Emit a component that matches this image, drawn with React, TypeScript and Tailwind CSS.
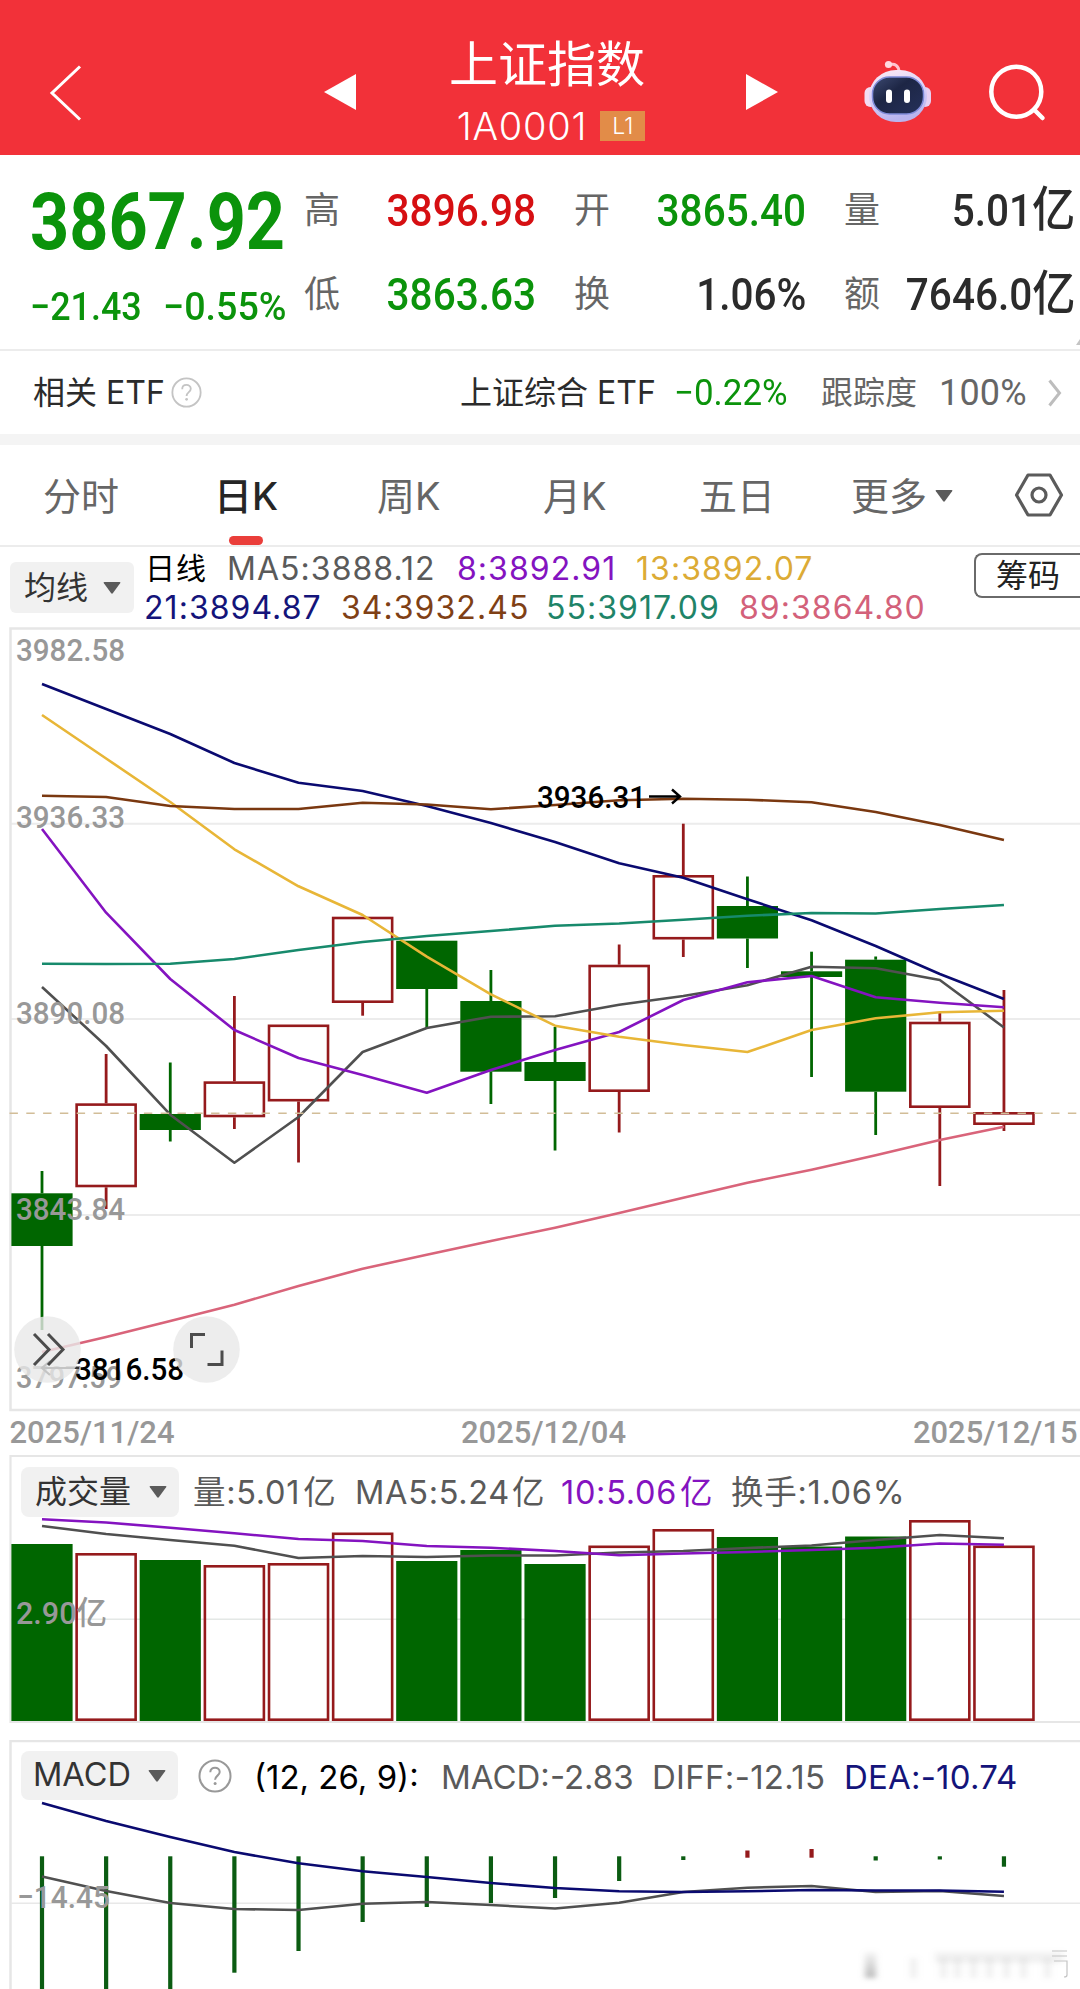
import { ReactNode } from "react";

const RED = "#951a1c";
const GREEN = "#006600";

// x centre of the n-th trading day
const cx = (i: number) => 42 + i * 64.13;

type Candle = { up: boolean; top: number; bottom: number; high: number; low: number };

const candles: Candle[] = [
  { up: false, top: 1193.3, bottom: 1246, high: 1171, low: 1330 },
  { up: true, top: 1103.3, bottom: 1187.3, high: 1054, low: 1209 },
  { up: false, top: 1114, bottom: 1130, high: 1062.5, low: 1141.5 },
  { up: true, top: 1081.3, bottom: 1117.3, high: 996, low: 1129 },
  { up: true, top: 1024.5, bottom: 1101.5, high: 1024.5, low: 1162.5 },
  { up: true, top: 916.7, bottom: 1003, high: 916.7, low: 1015.7 },
  { up: false, top: 940.7, bottom: 989, high: 940.7, low: 1028 },
  { up: false, top: 1001, bottom: 1071.7, high: 970, low: 1104 },
  { up: false, top: 1062, bottom: 1081, high: 1027, low: 1150.5 },
  { up: true, top: 964.7, bottom: 1092, high: 944.5, low: 1132.5 },
  { up: true, top: 875, bottom: 939.5, high: 823.7, low: 957 },
  { up: false, top: 906, bottom: 938.5, high: 876.5, low: 968 },
  { up: false, top: 971.3, bottom: 977, high: 951.7, low: 1077 },
  { up: false, top: 959.7, bottom: 1091.7, high: 956.5, low: 1135 },
  { up: true, top: 1021.7, bottom: 1108, high: 1013, low: 1186 },
  { up: true, top: 1112, bottom: 1125, high: 990, low: 1131 },
];

const maLines = [
  { color: "#505050", ys: [987, 1046, 1114.7, 1162.7, 1117, 1052, 1028, 1016.7, 1016.3, 1004.7, 996, 985.3, 966.7, 968.3, 980, 1027.5] },
  { color: "#8413c0", ys: [829, 912.7, 979, 1030, 1058, 1075, 1092.7, 1070, 1050, 1032, 1000, 982.3, 976, 997.3, 1002.7, 1007.3] },
  { color: "#e8b637", ys: [715, 758.5, 802, 849.3, 886.3, 915, 956.7, 994.3, 1025.7, 1036.7, 1045, 1052, 1030, 1018.3, 1012.3, 1010.7] },
  { color: "#0a0a70", ys: [684, 709, 734, 763, 782.7, 791, 806, 823, 842, 863.3, 877.7, 899.3, 920.3, 946, 974, 999] },
  { color: "#7a3810", ys: [795.7, 797, 806, 809, 809, 802.7, 804.5, 809.3, 805, 800.3, 798.7, 799.7, 802.3, 812, 825, 840] },
  { color: "#178a6c", ys: [963.7, 964, 963.7, 959, 950, 942, 936, 931, 925.8, 923.5, 919.7, 915.7, 913, 913.5, 909, 905] },
  { color: "#d9647a", ys: [1352, 1337, 1321, 1304.7, 1286, 1268.7, 1254.7, 1241, 1227.7, 1213, 1197.7, 1182.7, 1169.7, 1155.3, 1140, 1126.7] },
];

const volumes = [1544, 1553, 1560, 1565, 1563, 1532.5, 1561, 1550, 1564, 1545.5, 1529, 1537, 1546.5, 1536.5, 1520, 1545.5];

const volLines = [
  { color: "#505050", ys: [1526, 1534, 1540, 1545.7, 1558, 1556, 1557, 1555.5, 1555.5, 1552.5, 1551, 1548, 1545.5, 1540, 1535, 1538.3] },
  { color: "#8413c0", ys: [1519.3, 1522.5, 1527.7, 1533.3, 1539, 1541, 1546, 1547.7, 1551, 1555.3, 1553.5, 1552, 1550, 1547.7, 1543.5, 1544.7] },
];

const macdBars = [
  [1856.3, 1989], [1856.3, 1989], [1856.3, 1989], [1856.3, 1972.7],
  [1856.3, 1951], [1856.3, 1922], [1856.3, 1907], [1856.3, 1903],
  [1856.3, 1898], [1856.3, 1881], [1856.3, 1860], [1850.5, 1857.7],
  [1849, 1857.7], [1856.3, 1860.5], [1856.3, 1859.5], [1856.3, 1866.7],
];

const macdLines = [
  { color: "#505050", ys: [1876.5, 1891, 1903, 1909, 1910, 1903.7, 1902, 1905, 1908.5, 1902.7, 1892, 1887.7, 1886, 1892, 1891, 1896] },
  { color: "#0a0a70", ys: [1803, 1821, 1837, 1852, 1863.3, 1871.3, 1877, 1883, 1888, 1891.3, 1892, 1891.3, 1890, 1890.5, 1890.5, 1891.7] },
];

function Line({ color, ys }: { color: string; ys: number[] }) {
  return (
    <polyline
      points={ys.map((y, i) => `${cx(i)},${y}`).join(" ")}
      fill="none"
      stroke={color}
      strokeWidth={2.6}
      strokeLinejoin="round"
    />
  );
}

function Label({ x, y, w, color = "#989898", children }: { x: number; y: number; w: number; color?: string; children: ReactNode }) {
  return (
    <text
      x={x}
      y={y}
      textLength={w}
      lengthAdjust="spacingAndGlyphs"
      fill={color}
      className="font-['Roboto','Noto_Sans_CJK_SC',sans-serif] text-[32px] font-medium"
    >
      {children}
    </text>
  );
}

function Caret({ className = "" }: { className?: string }) {
  return (
    <svg viewBox="0 0 18 12" className={`h-3 w-[18px] shrink-0 ${className}`} fill="#5b5b5b">
      <path d="M1.5 0h15q1.5 0 .6 1.3L10 11q-1 1.300-2 0L.9 1.300Q0 0 1.500 0z" />
    </svg>
  );
}

function HelpIcon({ className = "" }: { className?: string }) {
  return (
    <svg viewBox="0 0 34 34" className={`shrink-0 ${className}`} fill="none" stroke="currentColor" strokeWidth={2}>
      <circle cx="17" cy="17" r="15.500" />
      <path d="M12.300 13.300c0-6.200 9.400-6 9.400-.3 0 3.600-4.600 3.700-4.600 7.800" />
      <circle cx="17.100" cy="24.500" r="1.500" fill="currentColor" stroke="none" />
    </svg>
  );
}

function RobotIcon() {
  return (
    <svg viewBox="0 0 68 64" className="h-16 w-[68px]">
      <defs>
        <linearGradient id="shell" x1="0" y1="0" x2="0.300" y2="1">
          <stop offset="0" stopColor="#ffeaf2" />
          <stop offset="0.500" stopColor="#dcd3fa" />
          <stop offset="1" stopColor="#b9b4ee" />
        </linearGradient>
        <linearGradient id="face" x1="0" y1="0" x2="1" y2="1">
          <stop offset="0" stopColor="#3d4a72" />
          <stop offset="0.400" stopColor="#1d2645" />
          <stop offset="1" stopColor="#25305a" />
        </linearGradient>
      </defs>
      <path d="M25 5c6-2 10 1 10 7" fill="none" stroke="#ffc4cf" strokeWidth="3" strokeLinecap="round" />
      <circle cx="24.500" cy="4.500" r="3.600" fill="#ffd9e0" />
      <rect x="0.500" y="27" width="12" height="20" rx="6" fill="#f3dcf3" />
      <rect x="55" y="27" width="12" height="20" rx="6" fill="#e7d0f2" />
      <rect x="5" y="10" width="58" height="52" rx="27" fill="url(#shell)" />
      <rect x="8.500" y="17" width="51" height="37" rx="17" fill="url(#face)" stroke="#7f8bd8" strokeWidth="1.500" />
      <rect x="22" y="29.500" width="6" height="13.500" rx="3" fill="#fff" />
      <rect x="40" y="29.500" width="6" height="13.500" rx="3" fill="#fff" />
    </svg>
  );
}

function Header() {
  return (
    <header className="flex h-[155px] bg-[#f23139] text-white">
      <div className="w-[324px] pt-[65px] pl-[49px]">
        <svg viewBox="0 0 34 56" className="h-14 w-[34px]" fill="none" stroke="#fff" strokeWidth={3}>
          <path d="M31 1.500 3 28l28 26.500" />
        </svg>
      </div>
      <svg viewBox="0 0 32 36" className="mt-[74px] h-9 w-8" fill="#fff">
        <path d="M0 18 32 0v36z" />
      </svg>
      <div className="flex w-[390px] flex-col items-center">
        <div className="mt-[39px] pr-2 text-[49px] leading-[52px]">上证指数</div>
        <div className="mt-[18px] flex h-[34px] items-center gap-[13px]">
          <span className="text-[38px] leading-[34px] font-light tracking-[0.8px]">1A0001</span>
          <span className="flex h-[30px] w-[45px] items-center justify-center bg-[#e28c48] text-[23px] leading-none font-light">L1</span>
        </div>
      </div>
      <svg viewBox="0 0 32 36" className="mt-[74px] h-9 w-8" fill="#fff">
        <path d="M32 18 0 0v36z" />
      </svg>
      <div className="mt-[60px] ml-[86px]">
        <RobotIcon />
      </div>
      <svg viewBox="0 0 60 60" className="mt-[62px] ml-[56px] h-[60px] w-[60px]" fill="none" stroke="#fff" strokeWidth={4.5} strokeLinecap="round">
        <circle cx="28.300" cy="29.700" r="25" />
        <path d="m46 47.500 8.500 8.500" />
      </svg>
    </header>
  );
}

function Stat({ label, value, unit, color, w }: { label: string; value: string; unit?: string; color: string; w: string }) {
  return (
    <div className={`flex h-[40px] items-center justify-between ${w}`}>
      <span className="text-[36px] leading-none text-[#666]">{label}</span>
      <span className={`origin-right scale-x-[0.9] font-['Roboto','Noto_Sans_CJK_SC',sans-serif] text-[45px] leading-none font-medium whitespace-nowrap ${color}`}>
        {value}
        {unit && <span className="text-[48px] leading-none">{unit}</span>}
      </span>
    </div>
  );
}

function Quote() {
  return (
    <section className="relative flex h-[196px] border-b-2 border-[#ececec]">
      <div className="w-[304px] pl-[30px] font-['Roboto','Noto_Sans_CJK_SC',sans-serif] text-[#0b930b]">
        <div className="mt-[27px] origin-left scale-x-[0.865] text-[79px] leading-[80px] font-bold whitespace-nowrap">3867.92</div>
        <div className="mt-[20px] flex h-[50px] items-center text-[39px] leading-none font-medium whitespace-nowrap">
          <span className="w-[133px]">
            <span className="inline-block origin-left scale-x-[0.92]">−21.43</span>
          </span>
          <span className="inline-block origin-left scale-x-[0.965]">−0.55%</span>
        </div>
      </div>
      <div className="mt-[35px] grid h-[124px] grid-cols-[270px_270px_232px] content-between">
        <Stat label="高" value="3896.98" color="text-[#d60f12]" w="w-[232px]" />
        <Stat label="开" value="3865.40" color="text-[#0b930b]" w="w-[232px]" />
        <Stat label="量" value="5.01" unit="亿" color="text-[#2b2b2b]" w="w-[231px]" />
        <Stat label="低" value="3863.63" color="text-[#0b930b]" w="w-[232px]" />
        <Stat label="换" value="1.06%" color="text-[#2b2b2b]" w="w-[232px]" />
        <Stat label="额" value="7646.0" unit="亿" color="text-[#2b2b2b]" w="w-[231px]" />
      </div>
      <svg viewBox="0 0 4 6" className="absolute right-0 bottom-1 h-1.5 w-1" fill="#c4c4c4">
        <path d="M4 0v6H0z" />
      </svg>
    </section>
  );
}

function EtfRow() {
  return (
    <section className="flex h-[94px] items-center border-b-[11px] border-[#f4f4f4] pl-[33px] text-[32px] leading-none whitespace-nowrap text-[#2b2b2b]">
      <span className="w-[138px]">相关 ETF</span>
      <HelpIcon className="h-[31px] w-[31px] text-[#c4c4c4]" />
      <span className="ml-[258px] w-[214px]">上证综合 ETF</span>
      <span className="w-[147px] font-['Roboto'] text-[36px] text-[#0b930b]">
        <span className="inline-block origin-left scale-x-[0.97]">−0.22%</span>
      </span>
      <span className="w-[118px] text-[#666]">跟踪度</span>
      <span className="w-[109px] font-['Roboto'] text-[36px] tracking-[0.2px] text-[#666]">100%</span>
      <svg viewBox="0 0 14 28" className="h-7 w-3.5" fill="none" stroke="#bdbdbd" strokeWidth={3}>
        <path d="m1.500 1.500 10 12.500-10 12.500" />
      </svg>
    </section>
  );
}

function Tabs() {
  return (
    <nav className="flex h-[102px] border-b-2 border-[#ececec] pl-[43px] text-[38px] leading-[102px] whitespace-nowrap text-[#666]">
      <span className="w-[171px]">分时</span>
      <span className="relative w-[163px] font-medium text-[#262626]">
        日K
        <i className="absolute bottom-0 left-[15px] h-[9px] w-[34px] rounded-full bg-[#ea3e3a]" />
      </span>
      <span className="w-[166px]">周K</span>
      <span className="w-[156px]">月K</span>
      <span className="w-[152px]">五日</span>
      <span className="w-[84px]">更多</span>
      <Caret className="mt-[45px]" />
      <svg viewBox="0 0 50 44" className="mt-[28px] ml-[61px] h-11 w-[50px]" fill="none" stroke="#5b5b5b" strokeWidth={3.2} strokeLinejoin="round">
        <path d="M14 2h22l11.500 20L36 42H14L2.500 22z" />
        <circle cx="25" cy="22" r="7" />
      </svg>
    </nav>
  );
}

function MaLegend() {
  return (
    <section className="flex h-[80px] pl-[10px] text-[32px] whitespace-nowrap">
      <button className="mt-[15px] flex h-[51px] w-[124px] items-center gap-[15px] rounded-md bg-[#f1f1f1] pl-3.5 leading-none text-[#333]">
        均线
        <Caret />
      </button>
      <div className="ml-[10px] w-[830px] pt-[2px] text-[32px] leading-[39px] tracking-[1.05px]">
        <div className="flex">
          <span className="w-[83px] pl-px text-[30px] text-black">日线</span>
          <span className="w-[230px] text-[#5a5a5a]">MA5:3888.12</span>
          <span className="w-[179px] text-[#8413c0]">8:3892.91</span>
          <span className="text-[#dcab35]">13:3892.07</span>
        </div>
        <div className="flex">
          <span className="w-[197px] text-[#14147a]">21:3894.87</span>
          <span className="w-[205px] text-[#7f4015]">34:3932.45</span>
          <span className="w-[193px] text-[#1f8468]">55:3917.09</span>
          <span className="text-[#d3617a]">89:3864.80</span>
        </div>
      </div>
      <button className="mt-[6px] h-[45px] w-[106px] rounded-l-lg border-2 border-r-0 border-[#6a6a6a] pl-[20px] text-left text-[32px] leading-[38px] text-[#222]">
        筹码
      </button>
    </section>
  );
}

function KChart() {
  return (
    <section className="h-[828px]">
      <svg viewBox="0 627 1080 828" className="block h-[828px] w-full">
        <g stroke="#ececec" strokeWidth="2">
          <path d="M11 823.700h1069M11 1019h1069M11 1215h1069" />
        </g>
        <path d="M1080 628.500H10.500V1410H1080" fill="none" stroke="#e6e6e6" strokeWidth="2.500" />
        {candles.map((c, i) => {
          const color = c.up ? RED : GREEN;
          return (
            <g key={i}>
              {c.high < c.top && <path d={`M${cx(i)} ${c.high}V${c.top}`} stroke={color} strokeWidth="2.800" />}
              <path d={`M${cx(i)} ${c.bottom}V${c.low}`} stroke={color} strokeWidth="2.800" />
              {c.up ? (
                <rect x={cx(i) - 29.5} y={c.top + 1.3} width={59} height={c.bottom - c.top - 2.6} fill="none" stroke={RED} strokeWidth="2.600" />
              ) : (
                <rect x={cx(i) - 30.6} y={c.top} width={61.2} height={c.bottom - c.top} fill={GREEN} />
              )}
            </g>
          );
        })}
        {maLines.map((l) => (
          <Line key={l.color} {...l} />
        ))}
        <path d="M9.500 1113.300H1080" stroke="#d2bd98" strokeWidth="1.600" strokeDasharray="8.400 8.400" />
        <Label x={16} y={660.500} w={109}>3982.58</Label>
        <Label x={16} y={827.800} w={109}>3936.33</Label>
        <Label x={16} y={1024} w={109}>3890.08</Label>
        <Label x={16} y={1219.500} w={109}>3843.84</Label>
        <Label x={16} y={1387.500} w={106}>3797.59</Label>
        <Label x={537} y={808} w={109} color="#000">3936.31</Label>
        <path d="M649 796.500h31m-8-7 8 7-8 7" fill="none" stroke="#000" strokeWidth="2.400" />
        <path d="M79 1368H42m8-7-8 7 8 7" fill="none" stroke="#333" strokeWidth="2.200" />
        <Label x={75} y={1380} w={109} color="#000">3816.58</Label>
        <circle cx="47.500" cy="1349.500" r="33.300" fill="#e8e8e8" opacity="0.800" />
        <circle cx="206.500" cy="1349.500" r="33.300" fill="#e8e8e8" opacity="0.800" />
        <g fill="none" stroke="#4c4c4c" strokeWidth="3">
          <path d="m34 1334 15 15.500-15 15.500M48 1334l15 15.500-15 15.500" />
          <path d="M191.500 1348v-13.500H205M222 1350.500v14h-14.500" />
        </g>
        <Label x={9.500} y={1443} w={165}>2025/11/24</Label>
        <Label x={461} y={1443} w={165}>2025/12/04</Label>
        <Label x={913} y={1443} w={164.500}>2025/12/15</Label>
      </svg>
    </section>
  );
}

function VolumePanel() {
  return (
    <section className="relative h-[285px]">
      <svg viewBox="0 1455 1080 285" className="block h-[285px] w-full">
        <path d="M1080 1456H10.500V1722H1080" fill="none" stroke="#e6e6e6" strokeWidth="2.200" />
        <path d="M11 1619.300h1069" stroke="#e4e8e6" strokeWidth="1.500" />
        {volumes.map((top, i) =>
          candles[i].up ? (
            <rect key={i} x={cx(i) - 29.5} y={top + 1.3} width={59} height={1719.700 - top - 1.3} fill="none" stroke={RED} strokeWidth="2.600" />
          ) : (
            <rect key={i} x={cx(i) - 30.6} y={top} width={61.2} height={1721 - top} fill={GREEN} />
          )
        )}
        {volLines.map((l) => (
          <Line key={l.color} {...l} />
        ))}
        <Label x={16} y={1624} w={91}>2.90亿</Label>
      </svg>
      <div className="absolute top-3 left-[21px] flex h-[50px] items-center text-[32px] leading-none whitespace-nowrap text-[#5a5a5a]">
        <button className="flex h-[50px] w-[158px] items-center gap-[18px] rounded-lg bg-[#f1f1f1] pl-3.5 text-[#333]">
          成交量
          <Caret />
        </button>
        <div className="ml-3.5 flex pt-0.5 text-[32.5px] tracking-[0.7px]">
          <span className="w-[162px]">
            量:5.01<span className="ml-[3px]">亿</span>
          </span>
          <span className="w-[206px]">
            MA5:5.24<span className="ml-[2px]">亿</span>
          </span>
          <span className="w-[170px] text-[#8413c0]">
            10:5.06<span className="ml-[3px]">亿</span>
          </span>
          <span>换手:1.06%</span>
        </div>
      </div>
    </section>
  );
}

function MacdPanel() {
  return (
    <section className="relative h-[249px]">
      <svg viewBox="0 1740 1080 249" className="block h-[249px] w-full">
        <path d="M1080 1741H10.500V1989" fill="none" stroke="#e6e6e6" strokeWidth="2.500" />
        <path d="M11 1903.300h1069" stroke="#e8e8e8" strokeWidth="1.500" />
        {macdBars.map(([top, bottom], i) => (
          <rect key={i} x={cx(i) - 2.1} y={top} width={4.2} height={bottom - top} fill={i === 11 || i === 12 ? RED : "#0b5c12"} />
        ))}
        {macdLines.map((l) => (
          <Line key={l.color} {...l} />
        ))}
        <Label x={17} y={1907.500} w={93}>−14.45</Label>
        {/* faded watermark strip */}
        <defs>
          <filter id="soft" x="-20%" y="-20%" width="140%" height="140%">
            <feGaussianBlur stdDeviation="3 2.500" />
          </filter>
          <linearGradient id="fade" x1="0" y1="0" x2="0" y2="1">
            <stop offset="0" stopColor="#999" stopOpacity="0.100" />
            <stop offset="1" stopColor="#999" stopOpacity="0.700" />
          </linearGradient>
        </defs>
        <g filter="url(#soft)">
          <rect x="865" y="1952" width="11" height="26" fill="url(#fade)" />
          {[910, 940, 954, 970, 986, 1003, 1020, 1044].map((x) => (
            <rect key={x} x={x} y="1958" width="7" height="20" fill="#999" opacity="0.160" />
          ))}
          <rect x="935" y="1952" width="128" height="11" fill="#999" opacity="0.140" />
        </g>
        <path d="M1052 1951h15M1052 1956h15M1054 1961h13v14q0 2-3 2" fill="none" stroke="#c4c4c4" strokeWidth="1.200" />
      </svg>
      <div className="absolute top-[11px] left-[21px] flex h-[49px] items-center text-[33px] leading-none whitespace-nowrap text-[#5a5a5a]">
        <button className="flex h-[49px] w-[157px] items-center rounded-lg bg-[#f1f1f1] pl-[12px] text-left text-[32.5px] text-[#333]">
          <span className="w-[115px]">MACD</span>
          <Caret />
        </button>
        <HelpIcon className="ml-5 h-[34px] w-[34px] text-[#999]" />
        <div className="ml-[22px] flex pt-[3px]">
          <span className="w-[187px] text-black">(12, 26, 9):</span>
          <span className="w-[211px]">MACD:-2.83</span>
          <span className="w-[192px] tracking-[0.3px]">DIFF:-12.15</span>
          <span className="tracking-[0.2px] text-[#14147a]">DEA:-10.74</span>
        </div>
      </div>
    </section>
  );
}

export default function App() {
  return (
    <div className="h-[1989px] w-[1080px] overflow-hidden bg-white font-['Inter','Noto_Sans_CJK_SC',sans-serif]">
      <Header />
      <Quote />
      <EtfRow />
      <Tabs />
      <MaLegend />
      <KChart />
      <VolumePanel />
      <MacdPanel />
    </div>
  );
}
